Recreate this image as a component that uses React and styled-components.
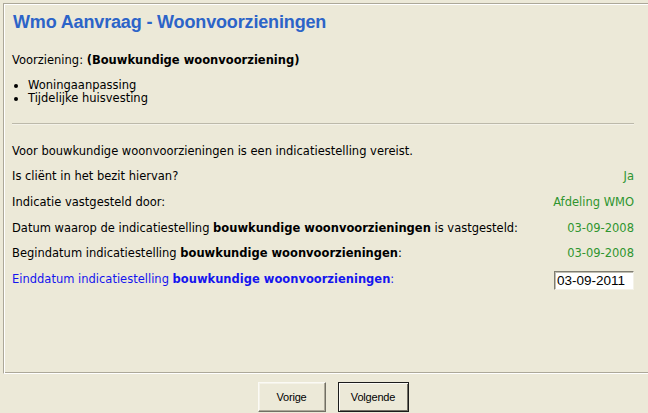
import styled, { createGlobalStyle } from "styled-components";

const GlobalStyle = createGlobalStyle`
  html, body {
    margin: 0;
    padding: 0;
    background: #ece9d8;
    overflow: hidden;
  }
  body {
    font-family: "DejaVu Sans", Verdana, sans-serif;
    font-size: 11.5px;
    color: #000;
  }
`;

const Page = styled.div`
  width: 660px;
  padding: 3px 0 0 3px;
`;

const Panel = styled.div`
  box-sizing: border-box;
  width: 660px;
  height: 371px;
  border: 1px solid;
  border-color: #aca899 #ffffff #ffffff #aca899;
  box-shadow: inset 1px 1px #ffffff, inset -1px -1px #aca899;
  padding: 7px 0 0 8px;
`;

const Content = styled.div`
  width: 622px;
`;

const Title = styled.h1`
  margin: 0 0 0 1px;
  font-family: "Liberation Sans", Arial, sans-serif;
  font-size: 18px;
  line-height: 22px;
  letter-spacing: -0.15px;
  font-weight: bold;
  color: #2c64c8;
`;

const Line = styled.div`
  margin-top: ${(p) => p.$top || 0}px;
  line-height: 14px;
  color: ${(p) => p.$color || "#000"};
`;

const List = styled.ul`
  margin: 12px 0 0 0;
  padding: 0 0 0 16px;
  line-height: 13px;
  list-style: disc;
`;

const Rule = styled.hr`
  margin: 18px 0 0 0;
  border: 0;
  border-top: 1px solid #bcb9aa;
  border-bottom: 1px solid #f4f2e8;
  height: 0;
`;

const Rows = styled.div`
  margin-top: 13px;
  display: grid;
  grid-auto-rows: 25.6px;
  align-items: center;
`;

const Row = styled.div`
  display: flex;
  justify-content: space-between;
  align-items: center;
  line-height: 14px;
  color: ${(p) => p.$color || "#000"};
`;

const Value = styled.span`
  color: #2f952f;
`;

const DateInput = styled.input`
  box-sizing: border-box;
  width: 80px;
  height: 19px;
  margin: 3px 0 0 0;
  padding: 0 0 0 2px;
  font-family: "Liberation Sans", Arial, sans-serif;
  font-size: 13.5px;
  color: #000;
  background: #fff;
  border: 1px solid;
  border-color: #7f7d72 #f4f2e8 #f4f2e8 #7f7d72;
  box-shadow: inset 1px 1px #c0beb2;
  outline: none;
`;

const ButtonBar = styled.div`
  display: flex;
  justify-content: center;
  gap: 12px;
  margin-top: 8px;
`;

const Button = styled.button`
  box-sizing: border-box;
  width: ${(p) => p.$width}px;
  height: 30px;
  padding: 0;
  font-family: "Liberation Sans", Arial, sans-serif;
  font-size: 11px;
  color: #000;
  background: #ece9d8;
  border: 1px solid;
  border-color: ${(p) => (p.$default ? "#1b1b1b" : "#fbfaf5 #716f64 #716f64 #fbfaf5")};
  box-shadow: ${(p) =>
    p.$default
      ? "inset 1px 1px #fbfaf5, inset -1px -1px #716f64"
      : "inset -1px -1px #aca899, inset 1px 1px #f4f2e8"};
  letter-spacing: -0.2px;
`;

export default function App() {
  return (
    <Page>
      <GlobalStyle />
      <Panel>
        <Content>
          <Title>Wmo Aanvraag - Woonvoorzieningen</Title>
          <Line $top={20}>
            Voorziening: <b>(Bouwkundige woonvoorziening)</b>
          </Line>
          <List>
            <li>Woningaanpassing</li>
            <li>Tijdelijke huisvesting</li>
          </List>
          <Rule />
          <Rows>
            <Row>Voor bouwkundige woonvoorzieningen is een indicatiestelling vereist.</Row>
            <Row>
              <span>Is cliënt in het bezit hiervan?</span>
              <Value>Ja</Value>
            </Row>
            <Row>
              <span>Indicatie vastgesteld door:</span>
              <Value>Afdeling WMO</Value>
            </Row>
            <Row>
              <span>
                Datum waarop de indicatiestelling <b>bouwkundige woonvoorzieningen</b> is vastgesteld:
              </span>
              <Value>03-09-2008</Value>
            </Row>
            <Row>
              <span>
                Begindatum indicatiestelling <b>bouwkundige woonvoorzieningen</b>:
              </span>
              <Value>03-09-2008</Value>
            </Row>
            <Row $color="#1515ee">
              <span>
                Einddatum indicatiestelling <b>bouwkundige woonvoorzieningen</b>:
              </span>
              <DateInput defaultValue="03-09-2011" />
            </Row>
          </Rows>
        </Content>
      </Panel>
      <ButtonBar>
        <Button $width={68}>Vorige</Button>
        <Button $width={71} $default>
          Volgende
        </Button>
      </ButtonBar>
    </Page>
  );
}
